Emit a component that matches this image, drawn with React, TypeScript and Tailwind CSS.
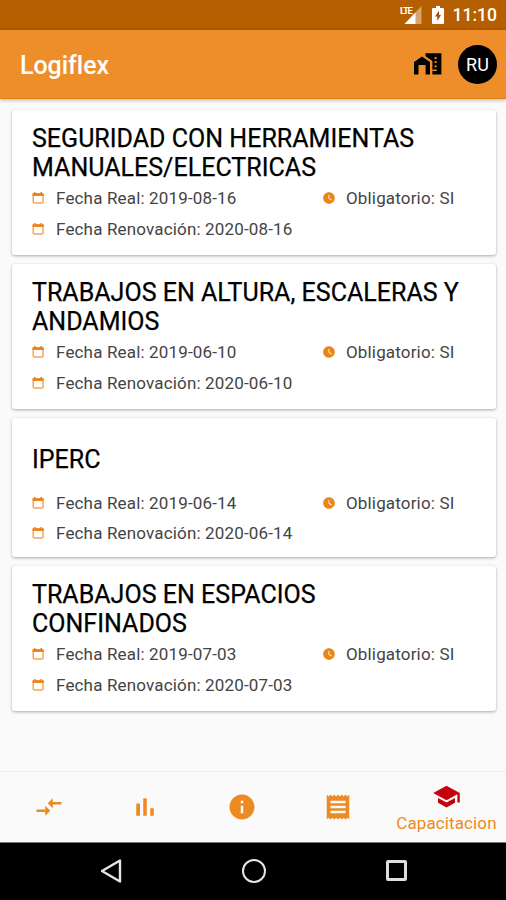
import { MdCompareArrows, MdInfo, MdReceipt, MdSchool, MdWatchLater } from "react-icons/md";

type Course = {
  title: string[];
  date: string;
  renewal: string;
};

const courses: Course[] = [
  {
    title: ["SEGURIDAD CON HERRAMIENTAS", "MANUALES/ELECTRICAS"],
    date: "2019-08-16",
    renewal: "2020-08-16",
  },
  {
    title: ["TRABAJOS EN ALTURA, ESCALERAS Y", "ANDAMIOS"],
    date: "2019-06-10",
    renewal: "2020-06-10",
  },
  { title: ["IPERC"], date: "2019-06-14", renewal: "2020-06-14" },
  {
    title: ["TRABAJOS EN ESPACIOS", "CONFINADOS"],
    date: "2019-07-03",
    renewal: "2020-07-03",
  },
];

function CalendarIcon() {
  return (
    <svg viewBox="0 0 12 12" className="h-3 w-3 shrink-0" fill="none">
      <rect x="1.2" y="2" width="9.8" height="9" rx="1" stroke="#f3a65c" strokeWidth="1.5" />
      <path d="M0.5 1.2h11.2v2.8H0.5z" fill="#ea8420" />
      <path d="M2 0h1.6v2H2zM8.4 0H10v2H8.4z" fill="#ea8420" />
    </svg>
  );
}

function CourseCard({ course }: { course: Course }) {
  const single = course.title.length === 1;

  return (
    <div
      className={`rounded-[3px] bg-white pl-5 shadow-[0_1px_3px_rgba(0,0,0,0.32)] ${
        single ? "h-[139px] pt-[27px]" : "h-[145px] pt-[14px]"
      }`}
    >
      {/* Title */}
      <h2 className="text-[25px] leading-[29px] tracking-[0.02px] whitespace-nowrap text-black [-webkit-text-stroke:0.25px_black]">
        {course.title.map((line) => (
          <span key={line} className="block">
            {line}
          </span>
        ))}
      </h2>

      {/* Dates */}
      <div
        className={`flex flex-col text-[17px] leading-5 tracking-[0.16px] text-[#444] ${
          single ? "mt-[19px] gap-[10px]" : "mt-[6px] gap-[11px]"
        }`}
      >
        <div className="flex items-center">
          <div className="flex w-[290px] items-center gap-3">
            <CalendarIcon />
            <span>Fecha Real: {course.date}</span>
          </div>
          <div className="flex items-center gap-[10px]">
            <MdWatchLater className="h-[14px] w-[14px] text-[#e98618]" />
            <span>Obligatorio: SI</span>
          </div>
        </div>
        <div className="flex items-center gap-3">
          <CalendarIcon />
          <span>Fecha Renovación: {course.renewal}</span>
        </div>
      </div>
    </div>
  );
}

export default function App() {
  return (
    <div className="flex h-[900px] w-[506px] flex-col overflow-hidden bg-[#fafafa] font-['Roboto',sans-serif]">
      {/* Status bar */}
      <div className="flex h-[30px] shrink-0 items-center justify-end bg-[#b55f00] pr-[9px] text-white">
        <svg viewBox="0 0 22 20" className="mr-[10px] h-5 w-[22px]">
          <path d="M21.5 1v18H4.5z" fill="#d6a470" />
          <path d="M15.5 7.5V19H4.5z" fill="#fff" />
          <text x="0" y="8.5" fontSize="9.5" fontWeight="700" letterSpacing="-1.2" fill="#fff">
            LTE
          </text>
        </svg>
        <svg viewBox="0 0 12 18" className="mr-[9px] h-[18px] w-3">
          <path d="M4 0h4v2h3a1 1 0 0 1 1 1v14a1 1 0 0 1-1 1H1a1 1 0 0 1-1-1V3a1 1 0 0 1 1-1h3z" fill="#fff" />
          <path d="M7 4.5L3 10.5h2.3V15L9 9H7z" fill="#a94c0b" />
        </svg>
        <span className="pt-[2px] text-[17.5px] leading-none font-medium">11:10</span>
      </div>

      {/* App bar */}
      <header className="z-10 flex h-[69px] shrink-0 items-center border-b border-[#e27f14] bg-[#ee8e2b] pr-[9px] pl-5 shadow-[0_1px_4px_rgba(0,0,0,0.3)]">
        <h1 className="flex-1 pt-[3px] text-[25px] font-medium tracking-[-0.05px] text-white">Logiflex</h1>
        <svg viewBox="0 0 30 24" className="mr-[15px] h-6 w-[30px]">
          <path d="M1 22.4V10L9 4.6 17 10v12.4h-4.4V13H5.5v9.4z" />
          <path d="M12.5 1.3h15.9v21.1h-9V9l-6.9-4.7z" />
          <path d="M21.5 5.2h2.2V7h-2.2zM21.5 9.3h2.2v1.8h-2.2zM21.5 13.4h2.2v1.8h-2.2zM19.4 17.5h4.3v1.6h-4.3z" fill="#ee8e2b" />
        </svg>
        <div className="flex h-[39px] w-[39px] items-center justify-center rounded-full bg-black pt-px text-[18px] text-white">
          RU
        </div>
      </header>

      {/* Courses */}
      <main className="flex flex-1 flex-col gap-[9px] pt-[11px] pr-[10px] pl-3">
        {courses.map((course) => (
          <CourseCard key={course.title[0]} course={course} />
        ))}
      </main>

      {/* Tabs */}
      <nav className="flex h-[71px] shrink-0 items-center border-t border-[#eee] text-[#ed8a22]">
        <div className="flex w-[97px] justify-center">
          <MdCompareArrows className="h-[30px] w-[30px]" />
        </div>
        <div className="flex w-24 justify-center">
          <svg viewBox="0 0 24 24" className="h-[30px] w-[30px]" fill="currentColor">
            <path d="M5 9.2h3V19H5zM10.6 5h2.8v14h-2.8zm5.6 8H19v6h-2.8z" />
          </svg>
        </div>
        <div className="flex w-[97px] justify-center">
          <MdInfo className="h-[30px] w-[30px]" />
        </div>
        <div className="flex w-24 justify-center">
          <MdReceipt className="h-[30px] w-[30px]" />
        </div>
        <div className="flex flex-1 flex-col items-center pl-px">
          <MdSchool className="h-[29px] w-[29px] text-[#c4000c]" />
          <span className="pt-[2px] text-[17px] leading-5 tracking-[0.1px]">Capacitacion</span>
        </div>
      </nav>

      {/* System navigation */}
      <div className="flex h-[58px] shrink-0 items-center border-t border-[#777] bg-black pb-[2px] pl-[99px]">
        <svg viewBox="0 0 24 26" className="h-[26px] w-6" fill="none" stroke="#e6e6e6" strokeWidth="2.4" strokeLinejoin="round">
          <path d="M21 2.5v21L3 13z" />
        </svg>
        <div className="ml-[119px] h-6 w-6 rounded-full border-[2.5px] border-[#e6e6e6]" />
        <div className="ml-[120px] h-[21px] w-[21px] rounded-[2px] border-[3px] border-[#dedede]" />
      </div>
    </div>
  );
}
